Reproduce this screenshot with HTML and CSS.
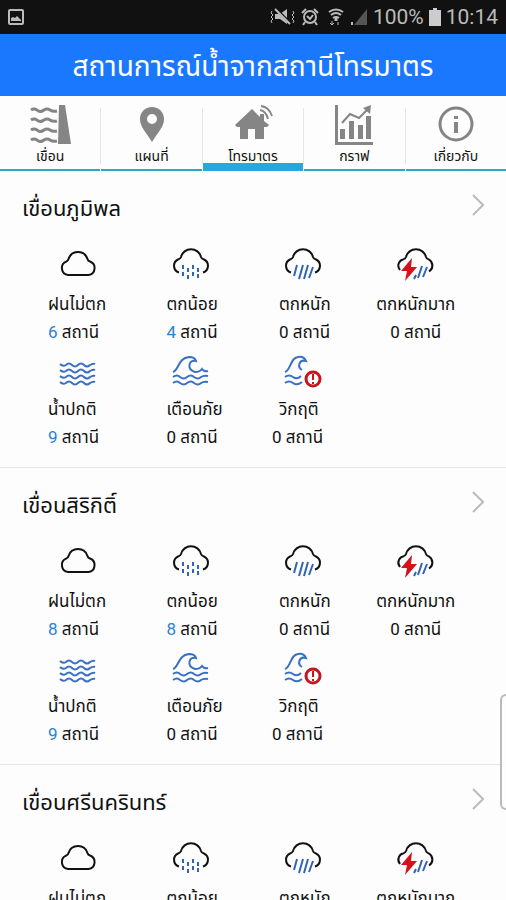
FILE: index.html
```html
<!DOCTYPE html>
<html lang="th">
<head>
  <meta charset="UTF-8">
  <meta name="viewport" content="width=device-width, initial-scale=1">
  <title>สถานการณ์น้ำจากสถานีโทรมาตร</title>
  <link rel="stylesheet" href="styles.css">
</head>
<body>
  <!-- icons -->
  <svg class="sprite" aria-hidden="true">
    <symbol id="cloud" viewBox="0 0 40 34">
      <path d="M10 28H30.500A7 7 0 0 0 32 14.500C30 14 30 13.500 29.500 12A10 10 0 0 0 10.500 12C10 14 9.500 14.300 8 14.700A7 7 0 0 0 10 28Z" fill="none" stroke="#111" stroke-width="2"/>
    </symbol>
    <symbol id="cloud-open" viewBox="0 0 40 34">
      <path d="M8 25.500A7 7 0 0 1 7 12.500C9 12 9.500 11.500 10 10A10.300 10.300 0 0 1 30 10C30.500 11.500 31 12 33 12.500A7 7 0 0 1 32 25.500" fill="none" stroke="#111" stroke-width="2"/>
    </symbol>
    <symbol id="rain-light" viewBox="0 0 40 34">
      <use href="#cloud-open"/>
      <path d="M12 18v4M22 18v4M17 21v4M27 21v4M12 25v4M22 25v4M17 28v4M27 27v4" stroke="#2f65b8" stroke-width="2"/>
    </symbol>
    <symbol id="rain-heavy" viewBox="0 0 40 34">
      <use href="#cloud-open"/>
      <path d="M14 18l-3 11M20 18l-4 14M25 18l-4 14M30 20l-4 11" stroke="#2f65b8" stroke-width="2"/>
    </symbol>
    <symbol id="rain-storm" viewBox="0 0 40 34">
      <path d="M4 23C0 18 4 13 7 12.500C9 12 9.500 11.500 10 10A10.300 10.300 0 0 1 30 10C30.500 11.500 31 12 33 12.500A7 7 0 0 1 33 24.500" fill="none" stroke="#111" stroke-width="2"/>
      <path d="M26 19l-4 12M31 20l-4 10M20 28l-2 4" stroke="#2f65b8" stroke-width="2"/>
      <path d="M16 11L5 24h6l-2 10 12-14h-6z" fill="#d4121c"/>
    </symbol>
    <symbol id="water-normal" viewBox="0 -2 40 34">
      <path id="wave" d="M2 10q3 3 6 1q3-3 6 0q3 3 6 0q3-3 6 0q3 3 6 0q3-2 5-1" fill="none" stroke="#3a70c4" stroke-width="2"/>
      <use href="#wave" y="6"/>
      <use href="#wave" y="12"/>
      <use href="#wave" y="18"/>
    </symbol>
    <symbol id="water-watch" viewBox="0 -3 40 34">
      <path d="M2 17C8 15 7 3 18 2Q24 2 25 6C18 4 15 14 24 17Q29 17 31 14Q33 17 37 16M2 22q4-3 7 0q4 3 7 0q4-3 7 0q4 3 7 0q3-2 7-1M2 28q4-3 7 0q4 3 7 0q4-3 7 0q4 3 7 0q3-2 7-1" fill="none" stroke="#3a70c4" stroke-width="2"/>
    </symbol>
    <symbol id="water-crisis" viewBox="0 -3 40 34">
      <path d="M2 17C8 15 7 3 15 2Q21 1 23 6C16 4 14 12 19 15M2 22q4-3 8 0q4 3 8-1M2 28q4-3 8 0q4 3 9-1" fill="none" stroke="#3a70c4" stroke-width="2"/>
      <circle cx="30" cy="24" r="7" fill="#fff" stroke="#c4161c" stroke-width="3"/>
      <path d="M30 19v6M30 27v2" stroke="#c4161c" stroke-width="2"/>
    </symbol>
  </svg>

  <div class="status-bar">
    <svg class="status-photo" viewBox="0 0 16 16" aria-hidden="true">
      <rect x="1" y="1" width="14" height="14" rx="1" fill="none" stroke="#bbb" stroke-width="2"/>
      <path d="M3 12V9l2-1 2 1 2-2 4 4v1z" fill="#bbb"/>
    </svg>
    <div class="status-icons">
      <svg width="26" height="18" viewBox="0 0 26 18" fill="none" stroke="#bbb" aria-hidden="true">
        <path d="M5 6h5l7-5v15l-7-5H5z" fill="#bbb" stroke="none"/>
        <path d="M6 1l14 14" stroke="#111" stroke-width="3"/>
        <path d="M5 1l15 15" stroke-width="2"/>
        <path d="M2 3l-1 2 2 2-2 2 2 2-2 2 1 2M23 3l1 2-2 2 2 2-2 2 2 2-1 2"/>
      </svg>
      <svg width="18" height="18" viewBox="0 0 18 18" fill="none" stroke="#bbb" stroke-width="2" aria-hidden="true">
        <circle cx="9" cy="9" r="6"/>
        <path d="M1 5l4-4M17 5l-4-4M4 14l-2 3M14 14l2 3M6 8l3 3 3-4"/>
      </svg>
      <svg class="status-wifi" width="18" height="18" viewBox="0 0 18 18" fill="none" stroke="#bbb" stroke-width="2" aria-hidden="true">
        <path d="M2 4q7-5 14 0M4 7q5-4 10 0M6 10q3-2 6 0"/>
        <path d="M9 10v3" stroke-width="3"/>
        <path d="M5 13v4M3 15l2 2 2-2M11 17v-3" stroke-width="1"/>
      </svg>
      <svg width="18" height="18" viewBox="0 0 18 18" aria-hidden="true">
        <path d="M17 1v16H4z" fill="#555"/>
        <path d="M1 14h2v3H1z" fill="#bbb"/>
      </svg>
      <span>100%</span>
      <svg width="12" height="18" viewBox="0 0 12 18" fill="#ccc" aria-hidden="true">
        <path d="M4 0h4v2h4v16H0V2h4z"/>
      </svg>
      <span>10:14</span>
    </div>
  </div>

  <header class="title-bar">
    <h1>สถานการณ์น้ำจากสถานีโทรมาตร</h1>
  </header>

  <nav class="tabs">
    <a class="tab" href="#dam">
      <svg viewBox="0 0 42 42" aria-hidden="true">
        <path d="M2 6q3-2 6 0q3 3 7 0q3-2 6 0q3 2 7 1M2 16q3-2 6 0q3 3 7 0q3-2 6 0q3 2 7 1M2 26q3-2 6 0q3 3 7 0q3-2 6 0q3 2 7 1M2 36q3-2 6 0q3 3 7 0q3-2 6 0q3 2 7 1" fill="none" stroke="#858585" stroke-width="3"/>
        <path d="M30 1h6l6 39H29z"/>
      </svg>
      <span>เขื่อน</span>
    </a>
    <a class="tab" href="#map">
      <svg viewBox="0 0 42 42" aria-hidden="true">
        <path d="M21 3C14 3 9 8 9 15C9 23 15 28 21 38C27 28 33 23 33 15C33 8 28 3 21 3ZM21 10a5 5 0 1 1 0 10a5 5 0 1 1 0-10" fill-rule="evenodd"/>
      </svg>
      <span>แผนที่</span>
    </a>
    <a class="tab active" href="#telemetry">
      <svg viewBox="0 0 42 42" aria-hidden="true">
        <path d="M20 5L3 21l2 2h3v12h8V25h7v10h9V23h3l2-2-5-4v-7h-4v3z"/>
        <path d="M28 6q6 1 8 9M29 2q8 1 11 10" fill="none" stroke="#858585" stroke-width="2"/>
      </svg>
      <span>โทรมาตร</span>
    </a>
    <a class="tab" href="#graph">
      <svg viewBox="0 0 42 42" aria-hidden="true">
        <path d="M2 1h3v37h35v3H2zM7 25h5v10H7zM16 17h5v18h-5zM25 21h5v14h-5zM33 12h5v23h-5z"/>
        <path d="M9 19l8-9 9 4 10-10" fill="none" stroke="#858585" stroke-width="2"/>
        <path d="M38 1l-1 9-7-6z"/>
      </svg>
      <span>กราฟ</span>
    </a>
    <a class="tab" href="#about">
      <svg viewBox="0 0 42 42" aria-hidden="true">
        <circle cx="21" cy="20" r="16" fill="none" stroke="#858585" stroke-width="3"/>
        <path d="M19 12h4v3h-4zM19 18h4v11h-4z"/>
      </svg>
      <span>เกี่ยวกับ</span>
    </a>
  </nav>

  <main class="dam-list">
    <section class="dam">
      <a class="dam-head" href="#bhumibol">
        <h2>เขื่อนภูมิพล</h2>
        <svg class="arrow" viewBox="0 0 12 22" aria-hidden="true"><path d="M1 1l10 10L1 21"/></svg>
      </a>
      <div class="stats">
        <div class="stat first"><svg><use href="#cloud"/></svg><p>ฝนไม่ตก</p><p class="count"><b>6</b> สถานี</p></div>
        <div class="stat"><svg><use href="#rain-light"/></svg><p>ตกน้อย</p><p class="count"><b>4</b> สถานี</p></div>
        <div class="stat"><svg><use href="#rain-heavy"/></svg><p>ตกหนัก</p><p class="count">0 สถานี</p></div>
        <div class="stat center"><svg><use href="#rain-storm"/></svg><p>ตกหนักมาก</p><p class="count">0 สถานี</p></div>
        <div class="stat first"><svg><use href="#water-normal"/></svg><p>น้ำปกติ</p><p class="count"><b>9</b> สถานี</p></div>
        <div class="stat"><svg><use href="#water-watch"/></svg><p>เตือนภัย</p><p class="count">0 สถานี</p></div>
        <div class="stat crisis"><svg><use href="#water-crisis"/></svg><p>วิกฤติ</p><p class="count">0 สถานี</p></div>
      </div>
    </section>

    <section class="dam">
      <a class="dam-head" href="#sirikit">
        <h2>เขื่อนสิริกิติ์</h2>
        <svg class="arrow" viewBox="0 0 12 22" aria-hidden="true"><path d="M1 1l10 10L1 21"/></svg>
      </a>
      <div class="stats">
        <div class="stat first"><svg><use href="#cloud"/></svg><p>ฝนไม่ตก</p><p class="count"><b>8</b> สถานี</p></div>
        <div class="stat"><svg><use href="#rain-light"/></svg><p>ตกน้อย</p><p class="count"><b>8</b> สถานี</p></div>
        <div class="stat"><svg><use href="#rain-heavy"/></svg><p>ตกหนัก</p><p class="count">0 สถานี</p></div>
        <div class="stat center"><svg><use href="#rain-storm"/></svg><p>ตกหนักมาก</p><p class="count">0 สถานี</p></div>
        <div class="stat first"><svg><use href="#water-normal"/></svg><p>น้ำปกติ</p><p class="count"><b>9</b> สถานี</p></div>
        <div class="stat"><svg><use href="#water-watch"/></svg><p>เตือนภัย</p><p class="count">0 สถานี</p></div>
        <div class="stat crisis"><svg><use href="#water-crisis"/></svg><p>วิกฤติ</p><p class="count">0 สถานี</p></div>
      </div>
    </section>

    <section class="dam">
      <a class="dam-head" href="#srinagarind">
        <h2>เขื่อนศรีนครินทร์</h2>
        <svg class="arrow" viewBox="0 0 12 22" aria-hidden="true"><path d="M1 1l10 10L1 21"/></svg>
      </a>
      <div class="stats">
        <div class="stat first"><svg><use href="#cloud"/></svg><p>ฝนไม่ตก</p></div>
        <div class="stat"><svg><use href="#rain-light"/></svg><p>ตกน้อย</p></div>
        <div class="stat"><svg><use href="#rain-heavy"/></svg><p>ตกหนัก</p></div>
        <div class="stat center"><svg><use href="#rain-storm"/></svg><p>ตกหนักมาก</p></div>
      </div>
    </section>
  </main>
  <div class="edge-handle"></div>
</body>
</html>
```
FILE: styles.css
```css
* {
  box-sizing: border-box;
}

body {
  margin: 0;
  height: 100vh;
  display: flex;
  flex-direction: column;
  overflow: hidden;
  background: #fdfdfd;
  color: #111;
  font-family: Roboto, "Noto Sans Thai", "Noto Sans", sans-serif;
}

h1, h2, p {
  margin: 0;
  font-weight: normal;
}

a {
  color: inherit;
  text-decoration: none;
}

.sprite {
  position: absolute;
  width: 0;
  height: 0;
}

symbol {
  overflow: visible;
}

/* status bar */
.status-bar {
  flex: none;
  height: 34px;
  padding: 0 8px;
  display: flex;
  align-items: center;
  justify-content: space-between;
  background: #111;
  color: #bbb;
  font-size: 21px;
}

.status-photo {
  width: 16px;
  height: 16px;
}

.status-icons {
  display: flex;
  align-items: center;
  gap: 5px;
}

.status-wifi {
  margin-left: 3px;
}

/* title */
.title-bar {
  flex: none;
  height: 62px;
  padding-top: 4px;
  display: flex;
  align-items: center;
  justify-content: center;
  background: #1a78ff;
  color: #fff;
}

.title-bar h1 {
  font-size: 28px;
  line-height: 40px;
  white-space: nowrap;
}

/* tabs */
.tabs {
  flex: none;
  height: 75px;
  display: flex;
  gap: 1px;
  background: linear-gradient(#fdfdfd 12px, #e6e6e6 12px, #e6e6e6 68px, #fdfdfd 68px);
}

.tab {
  flex: 1;
  padding-top: 8px;
  display: flex;
  flex-direction: column;
  align-items: center;
  background: #fdfdfd;
  box-shadow: inset 0 -2px #33a5cd;
  font-size: 14px;
  line-height: 20px;
}

.tab svg {
  flex: none;
  width: 42px;
  height: 42px;
  fill: #858585;
}

.tab.active {
  box-shadow: inset 0 -8px #25a9dc;
}

/* dams */
.dam-list {
  flex: 1;
  min-height: 0;
  overflow: hidden;
}

.dam {
  padding: 16px 22px;
  border-bottom: 1px solid #e4e4e4;
}

.dam-head {
  height: 44px;
  display: flex;
  align-items: flex-start;
  justify-content: space-between;
}

.dam-head h2 {
  font-size: 22px;
  line-height: 44px;
}

.arrow {
  width: 12px;
  height: 22px;
  margin-top: 7px;
  fill: none;
  stroke: #bbb;
  stroke-width: 2;
}

.stats {
  margin: 16px 12px 0 0;
  display: grid;
  grid-template-columns: repeat(4, 1fr);
  row-gap: 6px;
}

.stat {
  padding-left: 32px;
  font-size: 17px;
  line-height: 28px;
  white-space: nowrap;
}

.stat svg {
  display: block;
  width: 40px;
  height: 34px;
  margin: 0 0 9px 4px;
  overflow: visible;
}

.stat.first {
  padding-left: 26px;
}

.stat.first svg {
  margin-left: 10px;
}

.stat.center {
  padding-left: 0;
  text-align: center;
}

.stat.center svg {
  margin: 0 auto 9px;
}

.stat.crisis .count {
  margin-left: -7px;
}

.stat b {
  color: #2b82d4;
  font-weight: normal;
}

.edge-handle {
  position: absolute;
  right: 0;
  top: 694px;
  width: 6px;
  height: 116px;
  border: 2px solid #bbb;
  border-right: 0;
  border-radius: 8px 0 0 8px;
  background: #fdfdfd;
}
```
